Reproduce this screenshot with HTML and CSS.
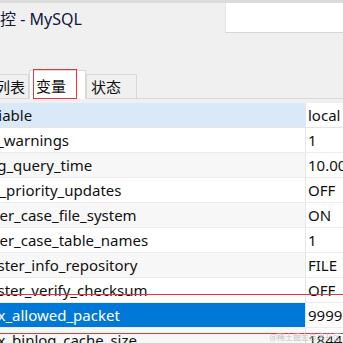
FILE: index.html
```html
<!DOCTYPE html>
<html lang="zh-CN">
<head>
    <meta charset="UTF-8">
    <title>监控 - MySQL</title>
    <link rel="stylesheet" href="styles.css">
</head>
<body>
    <div class="window">
        <div class="top-edge"></div>
        <div class="titlebar">
            <div class="title">服务器监控 - MySQL</div>
            <div class="search"></div>
        </div>

        <div class="tabs">
            <div class="tab tab-first">进程列表</div>
            <div class="tab active">变量</div>
            <div class="tab">状态</div>
        </div>

        <div class="grid">
            <div class="row head">
                <div class="cell name"><span class="clip">Variable</span></div>
                <div class="cell value">local value</div>
            </div>
            <div class="row">
                <div class="cell name"><span class="clip">log_warnings</span></div>
                <div class="cell value">1</div>
            </div>
            <div class="row alt">
                <div class="cell name"><span class="clip">long_query_time</span></div>
                <div class="cell value">10.000000</div>
            </div>
            <div class="row">
                <div class="cell name"><span class="clip">low_priority_updates</span></div>
                <div class="cell value">OFF</div>
            </div>
            <div class="row alt">
                <div class="cell name"><span class="clip">lower_case_file_system</span></div>
                <div class="cell value">ON</div>
            </div>
            <div class="row">
                <div class="cell name"><span class="clip">lower_case_table_names</span></div>
                <div class="cell value">1</div>
            </div>
            <div class="row alt">
                <div class="cell name"><span class="clip">master_info_repository</span></div>
                <div class="cell value">FILE</div>
            </div>
            <div class="row">
                <div class="cell name"><span class="clip">master_verify_checksum</span></div>
                <div class="cell value">OFF</div>
            </div>
            <div class="row selected">
                <div class="cell name"><span class="clip">max_allowed_packet</span></div>
                <div class="cell value">999999488</div>
            </div>
            <div class="row alt">
                <div class="cell name"><span class="clip">max_binlog_cache_size</span></div>
                <div class="cell value">18446744073709547520</div>
            </div>
        </div>

        <!-- annotations drawn over the screenshot -->
        <div class="mark mark-tab"></div>
        <div class="mark mark-line line-a"></div>
        <div class="mark mark-line line-b"></div>
        <div class="watermark">@稀土掘金技术社区</div>
    </div>
</body>
</html>
```

FILE: styles.css
```css
body {
    margin: 0;
    background-color: #f0f0f0;
    font-family: 'Noto Sans', 'Noto Sans CJK SC', sans-serif;
    color: #111;
}
.window {
    position: relative;
    width: 343px;
    height: 343px;
    overflow: hidden;
}
.top-edge {
    height: 3px;
    background-color: #dcdcdc;
}
.titlebar {
    display: flex;
    height: 30px;
}
.title {
    flex-grow: 1;
    margin-left: -64px;
    padding-top: 3px;
    font-size: 16px;
    line-height: 27px;
    color: #14163a;
    white-space: nowrap;
}
.search {
    width: 117px;
    height: 29px;
    background: white;
    border-left: 1px solid #e6e6e6;
    border-bottom: 1px solid #d6d6d6;
}

/* tab strip */
.tabs {
    display: flex;
    align-items: flex-end;
    height: 28px;
    margin-top: 37px;
    border-bottom: 1px solid #d9d9d9;
}
.tab {
    box-sizing: border-box;
    height: 25px;
    margin-bottom: -1px;
    padding: 0 15px 0 4px;
    border: 1px solid #d9d9d9;
    border-bottom: none;
    font-family: 'Noto Sans CJK SC', sans-serif;
    font-size: 15px;
    line-height: 24px;
    white-space: nowrap;
}
.tab-first {
    margin-left: -40px;
    padding-right: 3px;
}
.tab.active {
    height: 29px;
    padding: 2px 19px 0 6px;
    background: white;
    line-height: 26px;
}

/* variables grid */
.grid {
    margin-top: 4px;
}
.row {
    display: grid;
    grid-template-columns: 306px 1fr;
    height: 25px;
    box-sizing: border-box;
    border-bottom: 1px solid #ececec;
    background: white;
    font-size: 15px;
    line-height: 24px;
    white-space: nowrap;
}
.row.alt {
    background-color: #f7f7f7;
}
.row.head .name {
    background-color: #d9e9f8;
}
.row.head {
    border-bottom-color: #e4e4e4;
}
.cell {
    overflow: hidden;
}
.name {
    border-right: 1px solid #e6e6e6;
}
.clip {
    display: block;
    margin-left: -25px;
}
.value {
    padding-left: 2px;
    background: white;
}
.row.selected .name {
    background-color: #0078d7;
    color: white;
}

/* red annotations */
.mark {
    position: absolute;
    border: 1px solid #e0393b;
}
.mark-tab {
    left: 33px;
    top: 69px;
    width: 42px;
    height: 28px;
}
.mark-line {
    left: 0;
    width: 343px;
    height: 0;
    border-width: 1px 0 0 0;
}
.line-a {
    top: 294px;
}
.line-b {
    top: 333px;
}
.watermark {
    position: absolute;
    right: 2px;
    bottom: 1px;
    font-family: 'Noto Sans CJK SC', sans-serif;
    font-size: 8px;
    line-height: 10px;
    color: #c4c4c4;
}
```
